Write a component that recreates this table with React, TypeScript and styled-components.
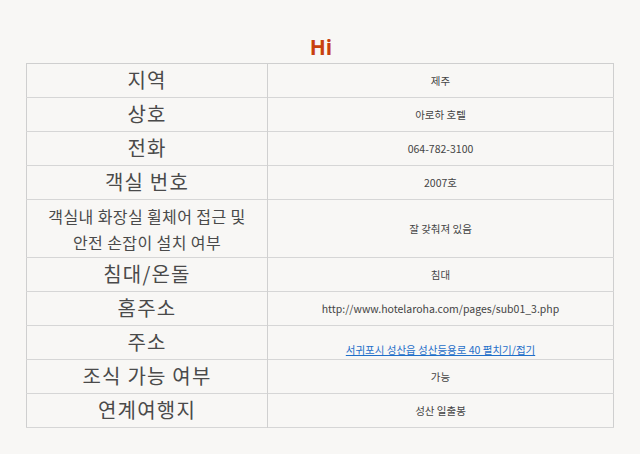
import React from "react";
import styled, { createGlobalStyle } from "styled-components";

const GlobalStyle = createGlobalStyle`
  body {
    margin: 0;
    background: #f8f7f5;
    font-family: "Noto Sans CJK KR", "Noto Sans", sans-serif;
  }
`;

const Page = styled.div`
  padding-top: 35px;
  display: flex;
  flex-direction: column;
  align-items: center;
`;

const Title = styled.h2`
  margin: 0 0 3px;
  height: 25px;
  line-height: 25px;
  font-family: "Open Sans", "Liberation Sans", sans-serif;
  font-size: 21px;
  font-weight: 700;
  color: #c8410e;
  padding-left: 2px;
`;

const Table = styled.table`
  width: 588px;
  border-collapse: collapse;
  border: 1px solid #cfcfcf;
`;

const Row = styled.tr<{ $tall?: boolean }>`
  height: ${(p) => (p.$tall ? 58 : 34)}px;
  border-bottom: 1px solid #d6d6d6;
`;

const Label = styled.th<{ $small?: boolean }>`
  width: 240px;
  padding: 0 0 ${(p) => (p.$small ? 0 : 2)}px;
  border-right: 1px solid #d0d0d0;
  font-weight: 400;
  color: #4a4a4a;
  font-size: ${(p) => (p.$small ? 16 : 20)}px;
  line-height: ${(p) => (p.$small ? 26 : 24)}px;
  letter-spacing: ${(p) => (p.$small ? 0.4 : 1.2)}px;
`;

const Value = styled.td<{ $bottom?: boolean }>`
  padding: ${(p) => (p.$bottom ? "14px 0 0" : "0")};
  text-align: center;
  font-size: 10.5px;
  color: #444;
  vertical-align: middle;
`;

const Link = styled.a`
  color: #1f6fc9;
  text-decoration: underline;
`;

const rows: [string, string][] = [
  ["지역", "제주"],
  ["상호", "아로하 호텔"],
  ["전화", "064-782-3100"],
  ["객실 번호", "2007호"],
];

const rows2: [string, string][] = [
  ["침대/온돌", "침대"],
  ["홈주소", "http://www.hotelaroha.com/pages/sub01_3.php"],
];

export default function App() {
  return (
    <>
      <GlobalStyle />
      <Page>
        <Title>Hi</Title>
        <Table>
          <tbody>
            {rows.map(([k, v]) => (
              <Row key={k}>
                <Label>{k}</Label>
                <Value>{v}</Value>
              </Row>
            ))}
            <Row $tall>
              <Label $small>
                객실내 화장실 휠체어 접근 및
                <br />
                안전 손잡이 설치 여부
              </Label>
              <Value>잘 갖춰져 있음</Value>
            </Row>
            {rows2.map(([k, v]) => (
              <Row key={k}>
                <Label>{k}</Label>
                <Value>{v}</Value>
              </Row>
            ))}
            <Row>
              <Label>주소</Label>
              <Value $bottom>
                <Link href="#">서귀포시 성산읍 성산등용로 40 펼치기/접기</Link>
              </Value>
            </Row>
            <Row>
              <Label>조식 가능 여부</Label>
              <Value>가능</Value>
            </Row>
            <Row>
              <Label>연계여행지</Label>
              <Value>성산 일출봉</Value>
            </Row>
          </tbody>
        </Table>
      </Page>
    </>
  );
}
